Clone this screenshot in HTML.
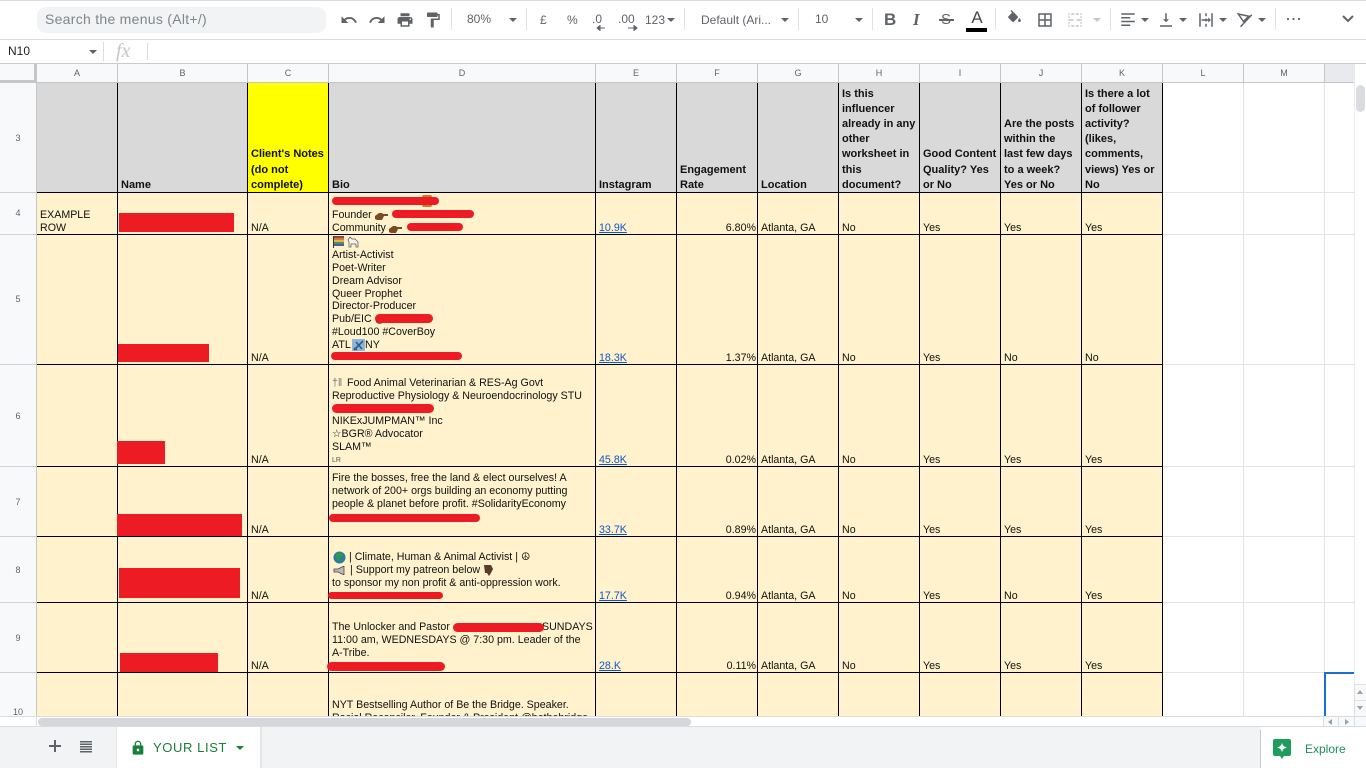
<!DOCTYPE html>
<html lang="en"><head><meta charset="utf-8"><title>YOUR LIST</title>
<style>
html,body{margin:0;padding:0;background:#fff}
body{width:1366px;height:768px;overflow:hidden;position:relative;font-family:"Liberation Sans",Arial,sans-serif;color:#000}
div,span,svg{position:absolute}
.t{font-size:10.67px;line-height:13px;height:13px;white-space:nowrap;color:#111;margin-top:1px}
.h{font-size:11px;line-height:15px;height:15px;white-space:nowrap;font-weight:bold;color:#111;margin-top:1px}
.l{color:#1155cc;text-decoration:underline}
.r{background:#ed1c24;border-radius:5px}
.rr{background:#ed1c24}
.v{width:1px;background:#000}
.hl{height:1px;background:#000}
.gv{width:1px;background:#e2e3e3}
.gh{height:1px;background:#e2e3e3}
.ch{top:64px;height:18px;line-height:18px;text-align:center;font-size:9px;color:#5f6368;border-right:1px solid #c4c7c5;box-sizing:border-box}
.rn{left:0;width:36px;text-align:center;font-size:9px;color:#5f6368;line-height:12px;height:12px;margin-top:1px}
.rb{left:0;width:36px;height:1px;background:#d0d2d4}
.tb{font-size:12px;color:#5f6368;line-height:16px;height:16px;white-space:nowrap}
.sep{top:8px;width:1px;height:22px;background:#dfe1e3}
.ar{width:0;height:0;border-left:4px solid transparent;border-right:4px solid transparent;border-top:4px solid #5f6368}
.ic{fill:#5f6368}
</style></head><body>

<!-- toolbar -->
<div style="left:0;top:0;width:1366px;height:1px;background:#dadce0"></div>
<div style="left:37px;top:7px;width:289px;height:26px;background:#f1f3f4;border-radius:9px"></div>
<div style="left:45px;top:11px;font-size:14px;line-height:17px;color:#80868b;white-space:nowrap;letter-spacing:.28px">Search the menus (Alt+/)</div>

<svg class="ic" style="left:340px;top:11px" width="18" height="18" viewBox="0 0 24 24"><path d="M12.5 8c-2.65 0-5.05.99-6.9 2.6L2 7v9h9l-3.62-3.62c1.39-1.16 3.16-1.88 5.12-1.88 3.54 0 6.55 2.31 7.6 5.5l2.37-.78C21.08 11.03 17.15 8 12.5 8z"/></svg>
<svg class="ic" style="left:368px;top:11px" width="18" height="18" viewBox="0 0 24 24"><path d="M18.4 10.6C16.55 8.99 14.15 8 11.5 8c-4.65 0-8.58 3.03-9.96 7.22L3.9 16c1.05-3.19 4.05-5.5 7.6-5.5 1.95 0 3.73.72 5.12 1.88L13 16h9V7l-3.6 3.6z"/></svg>
<svg class="ic" style="left:396px;top:11px" width="18" height="18" viewBox="0 0 24 24"><path d="M19 8H5c-1.66 0-3 1.34-3 3v6h4v4h12v-4h4v-6c0-1.66-1.34-3-3-3zm-3 11H8v-5h8v5zm3-7c-.55 0-1-.45-1-1s.45-1 1-1 1 .45 1 1-.45 1-1 1zm-1-9H6v4h12V3z"/></svg>
<svg class="ic" style="left:424px;top:11px" width="18" height="18" viewBox="0 0 24 24"><path d="M18 4V3c0-.55-.45-1-1-1H5c-.55 0-1 .45-1 1v4c0 .55.45 1 1 1h12c.55 0 1-.45 1-1V6h1v4H9v11c0 .55.45 1 1 1h2c.55 0 1-.45 1-1v-9h8V4h-3z"/></svg>
<div class="sep" style="left:451px"></div>
<div class="tb" style="left:467px;top:11px">80%</div>
<div class="ar" style="left:509px;top:18px"></div>
<div class="sep" style="left:526px"></div>
<div class="tb" style="left:540px;top:12px">£</div>
<div class="tb" style="left:567px;top:12px">%</div>
<div class="tb" style="left:592px;top:11px">.0</div>
<svg style="left:596px;top:25px" width="10" height="6"><path d="M1 3h8M1 3l3-2.5v5z" stroke="#5f6368" fill="#5f6368"/></svg>
<div class="tb" style="left:618px;top:11px">.00</div>
<svg style="left:628px;top:25px" width="10" height="6"><path d="M0 3h8M9 3L6 .5v5z" stroke="#5f6368" fill="#5f6368"/></svg>
<div class="tb" style="left:645px;top:12px">123</div>
<div class="ar" style="left:667px;top:18px"></div>
<div class="sep" style="left:684px"></div>
<div class="tb" style="left:701px;top:12px">Default (Ari...</div>
<div class="ar" style="left:781px;top:18px"></div>
<div class="sep" style="left:798px"></div>
<div class="tb" style="left:815px;top:11px">10</div>
<div class="ar" style="left:855px;top:18px"></div>
<div class="sep" style="left:872px"></div>
<div style="left:884px;top:11px;font:bold 17px/18px 'Liberation Sans',sans-serif;color:#5f6368">B</div>
<div style="left:913px;top:11px;font:italic 17px/18px 'Liberation Serif',serif;color:#5f6368;font-weight:bold">I</div>
<div style="left:941px;top:11px;font:15px/18px 'Liberation Sans',sans-serif;color:#5f6368">S</div>
<div style="left:939px;top:19px;width:15px;height:2px;background:#5f6368"></div>
<div style="left:969px;top:9px;width:16px;font-size:17px;line-height:18px;text-align:center;color:#444746">A</div>
<div style="left:966px;top:28px;width:21px;height:4px;background:#000"></div>
<div class="sep" style="left:995px"></div>
<svg class="ic" style="left:1006px;top:10px" width="17" height="17" viewBox="0 0 24 24"><path d="M16.560 8.940L7.620 0 6.210 1.410l2.380 2.380-5.150 5.150c-.59.59-.59 1.540 0 2.120l5.500 5.500c.29.290.68.440 1.060.440s.77-.15 1.060-.44l5.500-5.500c.59-.58.59-1.530 0-2.120zM19 11.500s-2 2.170-2 3.500c0 1.100.9 2 2 2s2-.9 2-2c0-1.330-2-3.500-2-3.500z"/></svg>
<svg class="ic" style="left:1036px;top:11px" width="18" height="18" viewBox="0 0 24 24"><path d="M3 3v18h18V3H3zm8 16H5v-6h6v6zm0-8H5V5h6v6zm8 8h-6v-6h6v6zm0-8h-6V5h6v6z"/></svg>
<svg style="left:1066px;top:11px" width="18" height="18" viewBox="0 0 24 24" fill="#c4c7c9"><path d="M3 5h2V3H3v2zm4 0h4V3H7v2zm6 0h4V3h-4v2zm6 0h2V3h-2v2zM3 9h2V7H3v2zm16 0h2V7h-2v2zM3 21h2v-2H3v2zm4 0h4v-2H7v2zm6 0h4v-2h-4v2zm6 0h2v-2h-2v2zM3 17h2v-2H3v2zm16 0h2v-2h-2v2zM3 13h7v-2H3v2zm11 0h7v-2h-7v2z"/></svg>
<div class="ar" style="left:1093px;top:18px;border-top-color:#c4c7c9"></div>
<div class="sep" style="left:1110px"></div>
<svg class="ic" style="left:1119px;top:11px" width="18" height="18" viewBox="0 0 24 24"><path d="M3 3h18v2H3zM3 8h12v2H3zM3 13h18v2H3zM3 18h12v2H3z"/></svg>
<div class="ar" style="left:1141px;top:18px"></div>
<svg class="ic" style="left:1157px;top:11px" width="18" height="18" viewBox="0 0 24 24"><path d="M4 19h16v2H4zM16 11h-3V3h-2v8H8l4 4z"/></svg>
<div class="ar" style="left:1179px;top:18px"></div>
<svg class="ic" style="left:1197px;top:11px" width="18" height="18" viewBox="0 0 24 24"><path d="M3 3h2v18H3zM19 3h2v18h-2zM11 3h2v4h-2zM11 10h2v4h-2zM11 17h2v4h-2zM6 11h9v-2.500l3.500 3.500-3.500 3.500V13H6z"/></svg>
<div class="ar" style="left:1219px;top:18px"></div>
<svg style="left:1236px;top:11px" width="18" height="18" viewBox="0 0 24 24" fill="none" stroke="#5f6368" stroke-width="2"><path d="M3 4l14 3-7 7zM21 5L6 21"/></svg>
<div class="ar" style="left:1258px;top:18px"></div>
<div class="sep" style="left:1275px"></div>
<svg class="ic" style="left:1285px;top:15px" width="18" height="8"><circle cx="3" cy="4" r="1.100"/><circle cx="8.500" cy="4" r="1.100"/><circle cx="14" cy="4" r="1.100"/></svg>
<svg style="left:1341px;top:14px" width="14" height="10" fill="none" stroke="#5f6368" stroke-width="2"><path d="M2 2l5 5 5-5"/></svg>

<!-- formula bar -->
<div style="left:0;top:39px;width:1366px;height:1px;background:#dadce0"></div>
<div style="left:8px;top:44px;font-size:12px;line-height:15px;color:#222">N10</div>
<div class="ar" style="left:89px;top:50px"></div>
<div style="left:103px;top:42px;width:1px;height:19px;background:#dadce0"></div>
<div style="left:116px;top:41px;font:italic 20px/21px 'Liberation Serif',serif;color:#c4c7c9">fx</div>
<div style="left:147px;top:43px;width:1px;height:17px;background:#dadce0"></div>
<div style="left:0;top:63px;width:1366px;height:1px;background:#c8cacc"></div>

<!-- grid -->
<div style="left:0;top:0;width:1366px;height:716px;overflow:hidden">
  <!-- column header -->
  <div style="left:0;top:64px;width:1324px;height:18px;background:#f8f9fa"></div>
  <div style="left:1324px;top:64px;width:30px;height:18px;background:#e8eaed"></div>
  <div style="left:0;top:64px;width:36px;height:16px;background:#f8f9fa"></div>
  <div style="left:34px;top:64px;width:3px;height:18px;background:#c4c6c8"></div>
  <div style="left:0;top:80px;width:37px;height:3px;background:#c4c6c8"></div>
  <div class="ch" style="left:37px;width:81px">A</div>
  <div class="ch" style="left:118px;width:130px">B</div>
  <div class="ch" style="left:248px;width:81px">C</div>
  <div class="ch" style="left:329px;width:267px">D</div>
  <div class="ch" style="left:596px;width:81px">E</div>
  <div class="ch" style="left:677px;width:81px">F</div>
  <div class="ch" style="left:758px;width:81px">G</div>
  <div class="ch" style="left:839px;width:81px">H</div>
  <div class="ch" style="left:920px;width:81px">I</div>
  <div class="ch" style="left:1001px;width:81px">J</div>
  <div class="ch" style="left:1082px;width:81px">K</div>
  <div class="ch" style="left:1163px;width:81px">L</div>
  <div class="ch" style="left:1244px;width:81px">M</div>
  <div style="left:0;top:82px;width:1354px;height:1px;background:#c4c7c9"></div>

  <!-- row header -->
  <div style="left:0;top:83px;width:36px;height:640px;background:#f8f9fa"></div>
  <div style="left:36px;top:83px;width:1px;height:640px;background:#c4c7c9"></div>
  <div class="rb" style="top:192px"></div><div class="rb" style="top:234px"></div><div class="rb" style="top:364px"></div><div class="rb" style="top:466px"></div><div class="rb" style="top:536px"></div><div class="rb" style="top:602px"></div><div class="rb" style="top:672px"></div>
  <div class="rn" style="top:131px">3</div><div class="rn" style="top:206px">4</div><div class="rn" style="top:292px">5</div><div class="rn" style="top:409px">6</div><div class="rn" style="top:495px">7</div><div class="rn" style="top:563px">8</div><div class="rn" style="top:631px">9</div><div class="rn" style="top:705px">10</div>

  <!-- fills -->
  <div style="left:37px;top:83px;width:1126px;height:109px;background:#d9d9d9"></div>
  <div style="left:248px;top:83px;width:80px;height:109px;background:#ffff00"></div>
  <div style="left:37px;top:193px;width:1126px;height:530px;background:#fff2cc"></div>

  <!-- light grid -->
  <div class="gv" style="left:1243px;top:83px;height:640px"></div>
  <div class="gv" style="left:1324px;top:83px;height:640px"></div>
  <div class="gh" style="left:1163px;top:192px;width:191px"></div>
  <div class="gh" style="left:1163px;top:234px;width:191px"></div>
  <div class="gh" style="left:1163px;top:364px;width:191px"></div>
  <div class="gh" style="left:1163px;top:466px;width:191px"></div>
  <div class="gh" style="left:1163px;top:536px;width:191px"></div>
  <div class="gh" style="left:1163px;top:602px;width:191px"></div>
  <div class="gh" style="left:1163px;top:672px;width:191px"></div>

  <!-- black grid -->
  <div class="v" style="left:117px;top:83px;height:640px"></div>
  <div class="v" style="left:247px;top:83px;height:640px"></div>
  <div class="v" style="left:328px;top:83px;height:640px"></div>
  <div class="v" style="left:595px;top:83px;height:640px"></div>
  <div class="v" style="left:676px;top:83px;height:640px"></div>
  <div class="v" style="left:757px;top:83px;height:640px"></div>
  <div class="v" style="left:838px;top:83px;height:640px"></div>
  <div class="v" style="left:919px;top:83px;height:640px"></div>
  <div class="v" style="left:1000px;top:83px;height:640px"></div>
  <div class="v" style="left:1081px;top:83px;height:640px"></div>
  <div class="v" style="left:1162px;top:83px;height:640px"></div>
  <div class="hl" style="left:37px;top:192px;width:1126px"></div>
  <div class="hl" style="left:37px;top:234px;width:1126px"></div>
  <div class="hl" style="left:37px;top:364px;width:1126px"></div>
  <div class="hl" style="left:37px;top:466px;width:1126px"></div>
  <div class="hl" style="left:37px;top:536px;width:1126px"></div>
  <div class="hl" style="left:37px;top:602px;width:1126px"></div>
  <div class="hl" style="left:37px;top:672px;width:1126px"></div>

  <!-- header text -->
  <div class="h" style="left:121px;top:177px">Name</div>
  <div class="h" style="left:251px;top:146px">Client's Notes</div>
  <div class="h" style="left:251px;top:162px">(do not</div>
  <div class="h" style="left:251px;top:177px">complete)</div>
  <div class="h" style="left:332px;top:177px">Bio</div>
  <div class="h" style="left:599px;top:177px">Instagram</div>
  <div class="h" style="left:680px;top:162px">Engagement</div>
  <div class="h" style="left:680px;top:177px">Rate</div>
  <div class="h" style="left:761px;top:177px">Location</div>
  <div class="h" style="left:842px;top:86px">Is this</div>
  <div class="h" style="left:842px;top:101px">influencer</div>
  <div class="h" style="left:842px;top:116px">already in any</div>
  <div class="h" style="left:842px;top:131px">other</div>
  <div class="h" style="left:842px;top:146px">worksheet in</div>
  <div class="h" style="left:842px;top:162px">this</div>
  <div class="h" style="left:842px;top:177px">document?</div>
  <div class="h" style="left:923px;top:146px">Good Content</div>
  <div class="h" style="left:923px;top:162px">Quality? Yes</div>
  <div class="h" style="left:923px;top:177px">or No</div>
  <div class="h" style="left:1004px;top:116px">Are the posts</div>
  <div class="h" style="left:1004px;top:131px">within the</div>
  <div class="h" style="left:1004px;top:146px">last few days</div>
  <div class="h" style="left:1004px;top:162px">to a week?</div>
  <div class="h" style="left:1004px;top:177px">Yes or No</div>
  <div class="h" style="left:1085px;top:86px">Is there a lot</div>
  <div class="h" style="left:1085px;top:101px">of follower</div>
  <div class="h" style="left:1085px;top:116px">activity?</div>
  <div class="h" style="left:1085px;top:131px">(likes,</div>
  <div class="h" style="left:1085px;top:146px">comments,</div>
  <div class="h" style="left:1085px;top:162px">views) Yes or</div>
  <div class="h" style="left:1085px;top:177px">No</div>

  <!-- row 4 -->
  <div class="t" style="left:40px;top:208px">EXAMPLE</div>
  <div class="t" style="left:40px;top:221px">ROW</div>
  <div class="t" style="left:251px;top:221px">N/A</div>
  <div class="t" style="left:332px;top:208px">Founder</div>
  <div class="t" style="left:332px;top:221px">Community</div>
  <div class="t l" style="left:599px;top:221px">10.9K</div>
  <div class="t" style="right:610px;top:221px">6.80%</div>
  <div class="t" style="left:761px;top:221px">Atlanta, GA</div>
  <div class="t" style="left:842px;top:221px">No</div>
  <div class="t" style="left:923px;top:221px">Yes</div>
  <div class="t" style="left:1004px;top:221px">Yes</div>
  <div class="t" style="left:1085px;top:221px">Yes</div>

  <!-- row 5 -->
  <div class="t" style="left:332px;top:248px">Artist-Activist</div>
  <div class="t" style="left:332px;top:261px">Poet-Writer</div>
  <div class="t" style="left:332px;top:274px">Dream Advisor</div>
  <div class="t" style="left:332px;top:287px">Queer Prophet</div>
  <div class="t" style="left:332px;top:299px">Director-Producer</div>
  <div class="t" style="left:332px;top:312px">Pub/EIC @</div>
  <div class="t" style="left:332px;top:325px">#Loud100 #CoverBoy</div>
  <div class="t" style="left:332px;top:338px">ATL</div>
  <div class="t" style="left:365px;top:338px">NY</div>
  <div class="t" style="left:251px;top:351px">N/A</div>
  <div class="t l" style="left:599px;top:351px">18.3K</div>
  <div class="t" style="right:610px;top:351px">1.37%</div>
  <div class="t" style="left:761px;top:351px">Atlanta, GA</div>
  <div class="t" style="left:842px;top:351px">No</div>
  <div class="t" style="left:923px;top:351px">Yes</div>
  <div class="t" style="left:1004px;top:351px">No</div>
  <div class="t" style="left:1085px;top:351px">No</div>

  <!-- row 6 -->
  <div class="t" style="left:332px;top:376px;color:#777">†ǁ</div>
  <div class="t" style="left:347px;top:376px">Food Animal Veterinarian &amp; RES-Ag Govt</div>
  <div class="t" style="left:332px;top:389px">Reproductive Physiology &amp; Neuroendocrinology STU</div>
  <div class="t" style="left:332px;top:414px">NIKExJUMPMAN™ Inc</div>
  <div class="t" style="left:332px;top:427px">☆BGR® Advocator</div>
  <div class="t" style="left:332px;top:440px">SLAM™</div>
  <div class="t" style="left:332px;top:453px;font-size:7px;color:#555">LR</div>
  <div class="t" style="left:251px;top:453px">N/A</div>
  <div class="t l" style="left:599px;top:453px">45.8K</div>
  <div class="t" style="right:610px;top:453px">0.02%</div>
  <div class="t" style="left:761px;top:453px">Atlanta, GA</div>
  <div class="t" style="left:842px;top:453px">No</div>
  <div class="t" style="left:923px;top:453px">Yes</div>
  <div class="t" style="left:1004px;top:453px">Yes</div>
  <div class="t" style="left:1085px;top:453px">Yes</div>

  <!-- row 7 -->
  <div class="t" style="left:332px;top:471px">Fire the bosses, free the land &amp; elect ourselves! A</div>
  <div class="t" style="left:332px;top:484px">network of 200+ orgs building an economy putting</div>
  <div class="t" style="left:332px;top:497px">people &amp; planet before profit. #SolidarityEconomy</div>
  <div class="t" style="left:251px;top:523px">N/A</div>
  <div class="t l" style="left:599px;top:523px">33.7K</div>
  <div class="t" style="right:610px;top:523px">0.89%</div>
  <div class="t" style="left:761px;top:523px">Atlanta, GA</div>
  <div class="t" style="left:842px;top:523px">No</div>
  <div class="t" style="left:923px;top:523px">Yes</div>
  <div class="t" style="left:1004px;top:523px">Yes</div>
  <div class="t" style="left:1085px;top:523px">Yes</div>

  <!-- row 8 -->
  <div class="t" style="left:349px;top:550px">| Climate, Human &amp; Animal Activist | ☮</div>
  <div class="t" style="left:350px;top:563px">| Support my patreon below</div>
  <div class="t" style="left:332px;top:576px">to sponsor my non profit &amp; anti-oppression work.</div>
  <div class="t" style="left:251px;top:589px">N/A</div>
  <div class="t l" style="left:599px;top:589px">17.7K</div>
  <div class="t" style="right:610px;top:589px">0.94%</div>
  <div class="t" style="left:761px;top:589px">Atlanta, GA</div>
  <div class="t" style="left:842px;top:589px">No</div>
  <div class="t" style="left:923px;top:589px">Yes</div>
  <div class="t" style="left:1004px;top:589px">No</div>
  <div class="t" style="left:1085px;top:589px">Yes</div>

  <!-- row 9 -->
  <div class="t" style="left:332px;top:620px">The Unlocker and Pastor</div>
  <div class="t" style="left:542px;top:620px">SUNDAYS</div>
  <div class="t" style="left:332px;top:633px">11:00 am, WEDNESDAYS @ 7:30 pm. Leader of the</div>
  <div class="t" style="left:332px;top:646px">A-Tribe.</div>
  <div class="t" style="left:251px;top:659px">N/A</div>
  <div class="t l" style="left:599px;top:659px">28.K</div>
  <div class="t" style="right:610px;top:659px">0.11%</div>
  <div class="t" style="left:761px;top:659px">Atlanta, GA</div>
  <div class="t" style="left:842px;top:659px">No</div>
  <div class="t" style="left:923px;top:659px">Yes</div>
  <div class="t" style="left:1004px;top:659px">Yes</div>
  <div class="t" style="left:1085px;top:659px">Yes</div>

  <!-- row 10 -->
  <div class="t" style="left:332px;top:698px">NYT Bestselling Author of Be the Bridge. Speaker.</div>
  <div class="t" style="left:332px;top:711px">Racial Reconciler. Founder &amp; President @bethebridge</div>

  <!-- emoji drawings -->
  <svg style="left:375px;top:212px" width="13" height="8"><path d="M0 4l4-3h3l1 1h5v2H9L7 8H2L0 7z" fill="#7a4a22"/></svg>
  <svg style="left:389px;top:225px" width="13" height="8"><path d="M0 4l4-3h3l1 1h5v2H9L7 8H2L0 7z" fill="#7a4a22"/></svg>
  <svg style="left:333px;top:236px" width="27" height="12"><rect x="0" y="0" width="11" height="2" fill="#8a4a3a"/><rect x="0" y="2" width="11" height="2" fill="#d9734f"/><rect x="0" y="4" width="11" height="2" fill="#e0b83c"/><rect x="0" y="6" width="11" height="2" fill="#4a8e6c"/><rect x="0" y="8" width="11" height="2" fill="#4a5ea0"/><rect x="0" y="0" width="1" height="12" fill="#333"/><path d="M15 4l2-3 2 2h3l3 3v5h-2V8h-5v3h-2V6z" fill="#f4f4f0" stroke="#555" stroke-width=".7"/></svg>
  <svg style="left:352px;top:339px" width="13" height="12"><rect width="13" height="12" fill="#8fb5d9"/><path d="M2 11l9-9M4 3l6 7M2 9l3 2" stroke="#2c5c8c" stroke-width="1.600" fill="none"/></svg>
  <svg style="left:333px;top:551px" width="13" height="13"><circle cx="6.500" cy="6.500" r="6" fill="#2a7d9c"/><path d="M3 3l5-1.500 2.500 3-3.500 1.500-1 4-2.500-2.500z" fill="#2f9a4a"/></svg>
  <svg style="left:333px;top:566px" width="13" height="9"><path d="M1 3h4l6-3v9L5 6H1z" fill="#bbb" stroke="#444" stroke-width=".8"/></svg>
  <svg style="left:483px;top:565px" width="11" height="12"><path d="M1 0h7l2 4-2 4-2 3-2-3H2z" fill="#5a3a28"/></svg>

  <!-- redactions: name column -->
  <div class="rr" style="left:119px;top:213px;width:115px;height:19px"></div>
  <div class="rr" style="left:118px;top:344px;width:91px;height:18px"></div>
  <div class="rr" style="left:117px;top:441px;width:48px;height:23px"></div>
  <div class="rr" style="left:117px;top:514px;width:125px;height:22px"></div>
  <div class="rr" style="left:119px;top:568px;width:121px;height:30px"></div>
  <div class="rr" style="left:120px;top:653px;width:98px;height:19px"></div>

  <!-- redactions: bio column -->
  <div style="left:422px;top:195px;width:10px;height:12px;background:#c97a2a;border-radius:2px"></div>
  <div class="r" style="left:332px;top:197px;width:107px;height:8px"></div>
  <div class="r" style="left:392px;top:210px;width:82px;height:8px"></div>
  <div class="r" style="left:407px;top:223px;width:56px;height:8px"></div>
  <div class="r" style="left:375px;top:314px;width:58px;height:9px"></div>
  <div class="r" style="left:331px;top:352px;width:131px;height:8px"></div>
  <div class="r" style="left:332px;top:404px;width:102px;height:9px"></div>
  <div class="r" style="left:329px;top:514px;width:151px;height:8px"></div>
  <div class="r" style="left:328px;top:592px;width:115px;height:7px"></div>
  <div class="r" style="left:453px;top:623px;width:91px;height:9px"></div>
  <div class="r" style="left:327px;top:662px;width:118px;height:9px"></div>

  <!-- selected cell -->
  <div style="left:1325px;top:672px;width:29px;height:2px;background:#1a6fd4"></div>
  <div style="left:1324px;top:672px;width:2px;height:50px;background:#1a6fd4"></div>
</div>

<!-- vertical scrollbar -->
<div style="left:1354px;top:64px;width:12px;height:652px;background:#fff;border-left:1px solid #e8eaed;box-sizing:border-box"></div>
<div style="left:1356px;top:85px;width:9px;height:27px;background:#dadce0;border-radius:5px"></div>
<div style="left:1354px;top:684px;width:12px;height:32px;background:#f8f9fa;border-left:1px solid #e0e0e0;border-top:1px solid #e0e0e0;box-sizing:border-box"></div>
<div style="left:1354px;top:700px;width:12px;height:1px;background:#e0e0e0"></div>
<div style="left:1357px;top:690px;width:0;height:0;border-left:3px solid transparent;border-right:3px solid transparent;border-bottom:4px solid #9aa0a6"></div>
<div style="left:1357px;top:706px;width:0;height:0;border-left:3px solid transparent;border-right:3px solid transparent;border-top:4px solid #9aa0a6"></div>

<!-- horizontal scrollbar -->
<div style="left:0;top:716px;width:1366px;height:11px;background:#fff;border-top:1px solid #dadce0;border-bottom:1px solid #dadce0;box-sizing:border-box"></div>
<div style="left:36px;top:716px;width:1px;height:11px;background:#e0e0e0"></div>
<div style="left:38px;top:718px;width:653px;height:8px;background:#d5d7da;border-radius:4px"></div>
<div style="left:1323px;top:717px;width:43px;height:9px;background:#f8f9fa"></div>
<div style="left:1323px;top:717px;width:1px;height:9px;background:#dadce0"></div>
<div style="left:1338px;top:717px;width:1px;height:9px;background:#dadce0"></div>
<div style="left:1354px;top:717px;width:1px;height:9px;background:#dadce0"></div>
<div style="left:1328px;top:719px;width:0;height:0;border-top:3px solid transparent;border-bottom:3px solid transparent;border-right:4px solid #9aa0a6"></div>
<div style="left:1345px;top:719px;width:0;height:0;border-top:3px solid transparent;border-bottom:3px solid transparent;border-left:4px solid #9aa0a6"></div>

<!-- sheet bar -->
<div style="left:0;top:727px;width:1366px;height:41px;background:#f1f3f4"></div>
<svg style="left:49px;top:740px" width="12" height="12"><path d="M6 0v12M0 6h12" stroke="#5f6368" stroke-width="2"/></svg>
<svg style="left:80px;top:741px" width="12" height="12" fill="#5f6368"><rect width="12" height="1.500"/><rect y="2.500" width="12" height="1.500"/><rect y="5" width="12" height="1.500"/><rect y="7.500" width="12" height="1.500"/><rect y="10" width="12" height="1.500"/></svg>
<div style="left:116px;top:727px;width:1px;height:41px;background:#e3e5e7"></div>
<div style="left:117px;top:727px;width:143px;height:41px;background:#fff;border-right:2px solid #e3e5e7;box-sizing:content-box"></div>
<svg style="left:131px;top:740px" width="14" height="16" viewBox="2 0 20 24" fill="#188038"><path d="M18 8h-1V6c0-2.760-2.240-5-5-5S7 3.240 7 6v2H6c-1.100 0-2 .9-2 2v10c0 1.100.9 2 2 2h12c1.100 0 2-.9 2-2V10c0-1.100-.9-2-2-2zm-6 9c-1.100 0-2-.9-2-2s.9-2 2-2 2 .9 2 2-.9 2-2 2zm3.100-9H8.900V6c0-1.710 1.390-3.100 3.100-3.100s3.100 1.390 3.100 3.100v2z"/></svg>
<div style="left:153px;top:740px;font-size:13px;font-weight:400;letter-spacing:.6px;line-height:16px;color:#188038;white-space:nowrap">YOUR LIST</div>
<div class="ar" style="left:236px;top:746px;border-top-color:#188038"></div>
<div style="left:1260px;top:730px;width:1px;height:38px;background:#c8cacc"></div>
<div style="left:1261px;top:727px;width:105px;height:41px;background:#fff"></div>
<svg style="left:1273px;top:739px" width="18" height="20" viewBox="0 0 18 20"><path d="M2 0h14a2 2 0 0 1 2 2v13a2 2 0 0 1-2 2h-5l-2 3-2-3H2a2 2 0 0 1-2-2V2a2 2 0 0 1 2-2z" fill="#1e9e5a"/><path d="M9 3.500c.6 3 1.500 4 5 5-3.500 1-4.400 2-5 5-.6-3-1.500-4-5-5 3.500-1 4.400-2 5-5z" fill="#fff"/></svg>
<div style="left:1305px;top:741px;font-size:12px;line-height:16px;color:#1e8e5a;white-space:nowrap">Explore</div>

</body></html>
